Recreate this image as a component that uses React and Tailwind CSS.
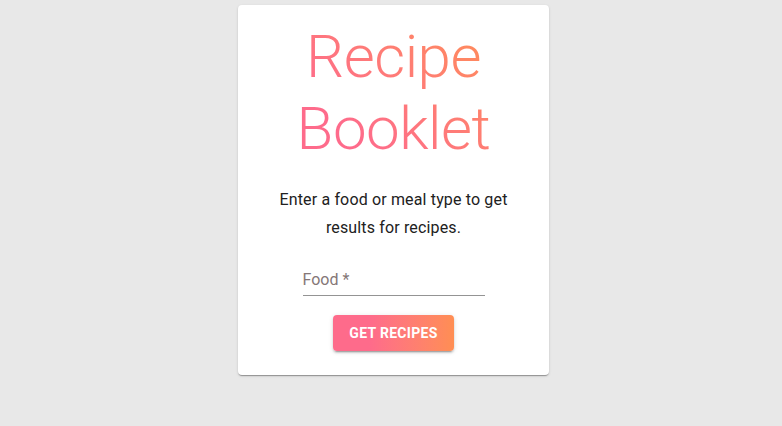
export default function App() {
  return (
    <div className="min-h-screen bg-[#e8e8e8] flex justify-center pl-[5px] pt-[5px] font-['Roboto',sans-serif]">
      <div className="w-[311px] h-fit bg-white rounded px-4 pt-4 pb-6 text-center shadow-[0_2px_1px_-1px_rgba(0,0,0,0.2),0_1px_1px_0_rgba(0,0,0,0.14),0_1px_3px_0_rgba(0,0,0,0.12)]">
        <h1 className="text-[60px] leading-[72px] font-light tracking-[-0.5px] bg-linear-45 from-[#FE6B8B] from-30% to-[#FF8E53] to-90% bg-clip-text text-transparent">
          Recipe Booklet
        </h1>
        <p className="mt-[21px] mx-auto max-w-[245px] text-base leading-7 tracking-[0.15px] text-[#212121]">
          Enter a food or meal type to get results for recipes.
        </p>
        <div className="mt-[26px] mx-auto w-[182px] border-b border-[#949494] pb-1 text-left">
          <div className="text-base leading-[23px] text-[#857777]">Food *</div>
        </div>
        <button className="mt-[19px] h-9 px-4 rounded text-sm font-bold uppercase tracking-[0.3px] text-white bg-linear-to-r from-[#FE6B8B] from-30% to-[#FF8E53] shadow-[0_3px_1px_-2px_rgba(0,0,0,0.2),0_2px_2px_0_rgba(0,0,0,0.14),0_1px_5px_0_rgba(0,0,0,0.12)]">
          Get Recipes
        </button>
      </div>
    </div>
  );
}
